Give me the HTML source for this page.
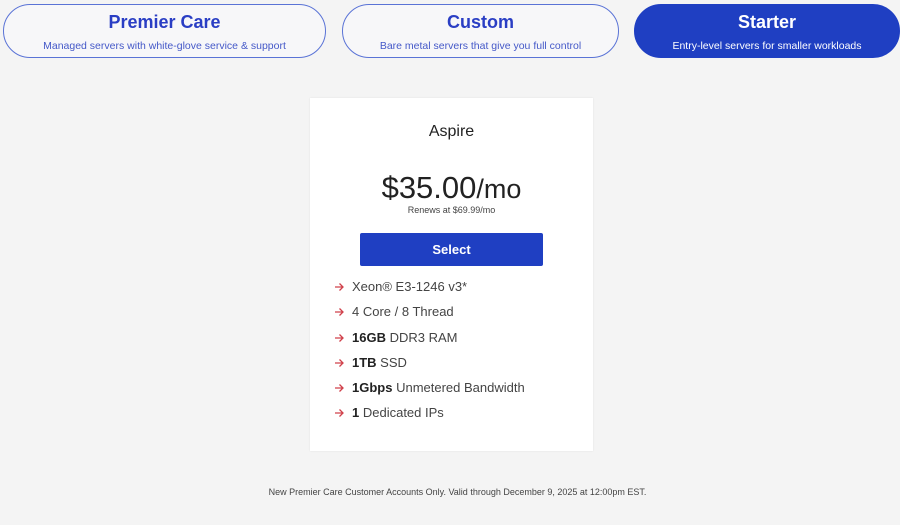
<!DOCTYPE html>
<html><head><style>
body{margin:0;width:900px;height:525px;background:#f4f4f4;font-family:"Liberation Sans",sans-serif;position:relative;overflow:hidden}
.tab{position:absolute;top:4px;height:54px;border:1.5px solid #5a73d6;border-radius:28px;background:#f7f7f9;text-align:center;color:#2a3ec4;box-sizing:border-box}
.tab b{display:block;font-size:18px;margin-top:7px}
.tab span{display:block;font-size:10.5px;margin-top:7px;color:#4458c8}
.tab.act{background:#1f3fc2;border-color:#1f3fc2;color:#fff}
.tab.act span{color:#fff}
.card{position:absolute;left:310px;top:98px;width:283px;height:353px;background:#fff;box-shadow:0 0 2px rgba(0,0,0,.08)}
.c{position:absolute;left:0;width:100%;text-align:center;color:#222}
.btn{position:absolute;left:50px;top:135px;width:183px;height:33px;background:#1f3fc2;color:#fff;font-weight:bold;font-size:13px;text-align:center;line-height:33px;border-radius:2px}
ul{position:absolute;left:24px;top:176px;margin:0;padding:0;list-style:none;font-size:13px;color:#444}
li{height:25.3px;line-height:25.3px}
li svg{vertical-align:-1px;margin-right:8px}
li b{color:#222}
.foot{position:absolute;top:487px;left:0;width:915px;text-align:center;font-size:9px;color:#444}
</style></head><body>
<div class="tab" style="left:3px;width:323px"><b>Premier Care</b><span>Managed servers with white-glove service &amp; support</span></div>
<div class="tab" style="left:342px;width:277px"><b>Custom</b><span>Bare metal servers that give you full control</span></div>
<div class="tab act" style="left:634px;width:266px"><b>Starter</b><span>Entry-level servers for smaller workloads</span></div>
<div class="card">
<div class="c" style="top:25px;font-size:16px">Aspire</div>
<div class="c" style="top:72px;font-size:31px">$35.00<span style="font-size:27px">/mo</span></div>
<div class="c" style="top:107px;font-size:9px;color:#444">Renews at $69.99/mo</div>
<div class="btn">Select</div>
<ul>
<li><svg width="10" height="10" viewBox="0 0 10 10"><path d="M1 5H9M5.5 1.5L9 5L5.5 8.5" fill="none" stroke="#d0404a" stroke-width="1.3"/></svg>Xeon® E3-1246 v3*</li>
<li><svg width="10" height="10" viewBox="0 0 10 10"><path d="M1 5H9M5.5 1.5L9 5L5.5 8.5" fill="none" stroke="#d0404a" stroke-width="1.3"/></svg>4 Core / 8 Thread</li>
<li><svg width="10" height="10" viewBox="0 0 10 10"><path d="M1 5H9M5.5 1.5L9 5L5.5 8.5" fill="none" stroke="#d0404a" stroke-width="1.3"/></svg><b>16GB</b> DDR3 RAM</li>
<li><svg width="10" height="10" viewBox="0 0 10 10"><path d="M1 5H9M5.5 1.5L9 5L5.5 8.5" fill="none" stroke="#d0404a" stroke-width="1.3"/></svg><b>1TB</b> SSD</li>
<li><svg width="10" height="10" viewBox="0 0 10 10"><path d="M1 5H9M5.5 1.5L9 5L5.5 8.5" fill="none" stroke="#d0404a" stroke-width="1.3"/></svg><b>1Gbps</b> Unmetered Bandwidth</li>
<li><svg width="10" height="10" viewBox="0 0 10 10"><path d="M1 5H9M5.5 1.5L9 5L5.5 8.5" fill="none" stroke="#d0404a" stroke-width="1.3"/></svg><b>1</b> Dedicated IPs</li>
</ul>
</div>
<div class="foot">New Premier Care Customer Accounts Only. Valid through December 9, 2025 at 12:00pm EST.</div>
</body></html>
